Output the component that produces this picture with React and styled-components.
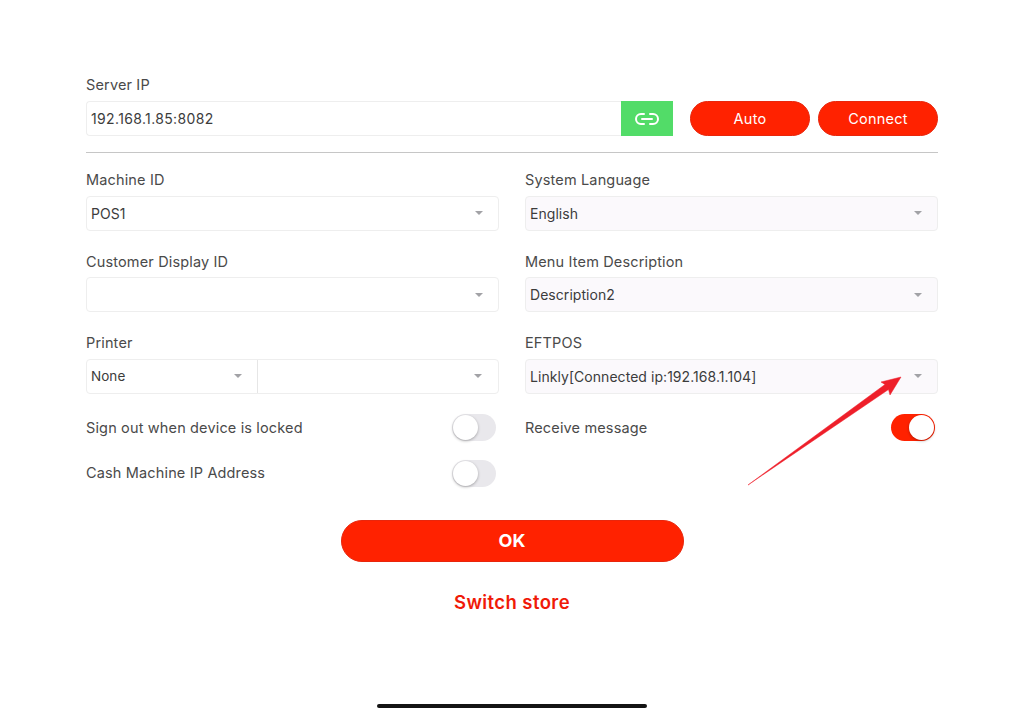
import React from "react";
import styled, { createGlobalStyle } from "styled-components";

const Global = createGlobalStyle`
  html, body { margin: 0; padding: 0; background: #fff; }
  #root { width: 1024px; height: 715px; overflow: hidden; }
  * { box-sizing: border-box; }
`;

const Page = styled.div`
  position: relative;
  width: 1024px;
  height: 715px;
  padding: 76px 86px 0;
  font-family: Inter, "Liberation Sans", sans-serif;
  color: #444;
  background: #fff;
  display: flex;
  flex-direction: column;
`;

const Label = styled.div`
  font-size: 14.5px;
  line-height: 18px;
  letter-spacing: 0.15px;
  color: #4a4a4a;
`;

const ServerLabel = styled(Label)`
  margin-bottom: 7px;
`;

const ToggleLabel = styled(Label)`
  margin-top: ${(p) => (p.$up ? "0" : "1px")};
  margin-bottom: ${(p) => (p.$up ? "1px" : "0")};
`;

const ServerRow = styled.div`
  display: flex;
  align-items: stretch;
  height: 35px;
`;

const ServerInput = styled.div`
  flex: 0 0 535px;
  border: 1px solid #eeeeee;
  border-right: none;
  border-radius: 4px 0 0 4px;
  padding-left: 4px;
  display: flex;
  align-items: center;
  font-size: 14px;
  letter-spacing: 0.35px;
  color: #3c3c3c;
`;

const LinkButton = styled.div`
  flex: 0 0 52px;
  background: #52dc68;
  display: flex;
  align-items: center;
  justify-content: center;
`;

const Pill = styled.div`
  flex: 0 0 120px;
  margin-left: ${(p) => p.$gap}px;
  background: #ff2200;
  border: 1px solid #e8260c;
  border-radius: 18px;
  color: #fff;
  font-size: 14.5px;
  letter-spacing: 0.25px;
  display: flex;
  align-items: center;
  justify-content: center;
`;

const Divider = styled.div`
  height: 1px;
  background: #c6c6c6;
  margin: 16px 0 18px;
`;

const Grid = styled.div`
  display: grid;
  grid-template-columns: 413px 413px;
  column-gap: 26px;
  row-gap: 22px;
`;

const Field = styled.div`
  display: flex;
  flex-direction: column;
  gap: 6.6px;
`;

const SelectBox = styled.div`
  height: 35px;
  border: 1px solid #eeeeee;
  border-radius: 4px;
  background: ${(p) => (p.$tint ? "#fbf9fc" : "#fff")};
  display: flex;
  align-items: center;
  justify-content: space-between;
  padding: 0 15px 0 4px;
  font-size: 14px;
  letter-spacing: 0.05px;
  color: #3c3c3c;
`;

const Caret = styled.span`
  width: 0;
  height: 0;
  border-left: 4.5px solid transparent;
  border-right: 4.5px solid transparent;
  border-top: 4.5px solid #a2a2a6;
`;

const SplitSelect = styled.div`
  height: 35px;
  border: 1px solid #eeeeee;
  border-radius: 4px;
  display: flex;
  font-size: 13.5px;
  letter-spacing: 0.05px;
  color: #3c3c3c;
`;

const SplitPart = styled.div`
  flex: ${(p) => (p.$first ? "0 0 171px" : "1")};
  border-right: ${(p) => (p.$first ? "1px solid #e6e6e6" : "none")};
  display: flex;
  align-items: center;
  justify-content: space-between;
  padding: ${(p) => (p.$first ? "0 15px 0 4px" : "0 16px 0 0")};
`;

const ToggleGrid = styled.div`
  display: grid;
  grid-template-columns: 413px 413px;
  column-gap: 26px;
  grid-auto-rows: 27px;
  row-gap: 19px;
  margin-top: 20px;
`;

const ToggleRow = styled.div`
  display: flex;
  align-items: center;
  justify-content: space-between;
  padding-right: 3px;
`;

const Track = styled.div`
  position: relative;
  width: 44px;
  height: 27px;
  border-radius: 14px;
  background: ${(p) => (p.$on ? "#ff2200" : "#e9e8ec")};
`;

const Thumb = styled.div`
  position: absolute;
  top: 1px;
  left: ${(p) => (p.$on ? "18px" : "1px")};
  width: 25px;
  height: 25px;
  border-radius: 50%;
  background: #fff;
  box-shadow: 0 1px 3px rgba(0, 0, 0, 0.3);
`;

const Actions = styled.div`
  display: flex;
  flex-direction: column;
  align-items: center;
  margin-top: 33px;
`;

const OkButton = styled.div`
  width: 343px;
  height: 42px;
  background: #ff2200;
  border: 1px solid #e8260c;
  border-radius: 21px;
  color: #fff;
  font-size: 18px;
  font-weight: 700;
  display: flex;
  align-items: center;
  justify-content: center;
`;

const SwitchStore = styled.div`
  margin-top: 29px;
  font-size: 18.5px;
  line-height: 22px;
  font-weight: 600;
  letter-spacing: 0.4px;
  color: #f01a08;
`;

const HomeBar = styled.div`
  position: absolute;
  left: 377px;
  top: 704px;
  width: 270px;
  height: 4px;
  border-radius: 2px;
  background: #141414;
`;

const ArrowMark = styled.svg`
  position: absolute;
  left: 0;
  top: 0;
  pointer-events: none;
`;

const fields = [
  ["Machine ID", "POS1", false],
  ["System Language", "English", true],
  ["Customer Display ID", "", false],
  ["Menu Item Description", "Description2", true],
];

export default function App() {
  return (
    <Page>
      <Global />
      <ServerLabel>Server IP</ServerLabel>
      <ServerRow>
        <ServerInput>192.168.1.85:8082</ServerInput>
        <LinkButton>
          <svg width="26" height="14" viewBox="0 0 26 14" fill="none" stroke="#fff" strokeWidth="2" strokeLinecap="round">
            <path d="M10 2H7a5 5 0 0 0 0 10h3" />
            <path d="M16 2h3a5 5 0 0 1 0 10h-3" />
            <path d="M8 7h10" />
          </svg>
        </LinkButton>
        <Pill $gap={17}>Auto</Pill>
        <Pill $gap={8}>Connect</Pill>
      </ServerRow>
      <Divider />
      <Grid>
        {fields.map(([label, value, tint]) => (
          <Field key={label}>
            <Label>{label}</Label>
            <SelectBox $tint={tint}>
              <span>{value}</span>
              <Caret />
            </SelectBox>
          </Field>
        ))}
        <Field>
          <Label>Printer</Label>
          <SplitSelect>
            <SplitPart $first>
              <span>None</span>
              <Caret />
            </SplitPart>
            <SplitPart>
              <span />
              <Caret />
            </SplitPart>
          </SplitSelect>
        </Field>
        <Field>
          <Label>EFTPOS</Label>
          <SelectBox $tint>
            <span>Linkly[Connected ip:192.168.1.104]</span>
            <Caret />
          </SelectBox>
        </Field>
      </Grid>
      <ToggleGrid>
        <ToggleRow>
          <ToggleLabel>Sign out when device is locked</ToggleLabel>
          <Track>
            <Thumb />
          </Track>
        </ToggleRow>
        <ToggleRow>
          <ToggleLabel>Receive message</ToggleLabel>
          <Track $on>
            <Thumb $on />
          </Track>
        </ToggleRow>
        <ToggleRow>
          <ToggleLabel $up>Cash Machine IP Address</ToggleLabel>
          <Track>
            <Thumb />
          </Track>
        </ToggleRow>
      </ToggleGrid>
      <Actions>
        <OkButton>OK</OkButton>
        <SwitchStore>Switch store</SwitchStore>
      </Actions>
      <ArrowMark width="1024" height="715" viewBox="0 0 1024 715">
        <path d="M748 485 L885 384.5 L881 382 L901 377 L890 395 L888.5 389.5 Z" fill="#ee1f2a" stroke="#ee1f2a" strokeWidth="0.5" strokeLinejoin="round" />
      </ArrowMark>
      <HomeBar />
    </Page>
  );
}
